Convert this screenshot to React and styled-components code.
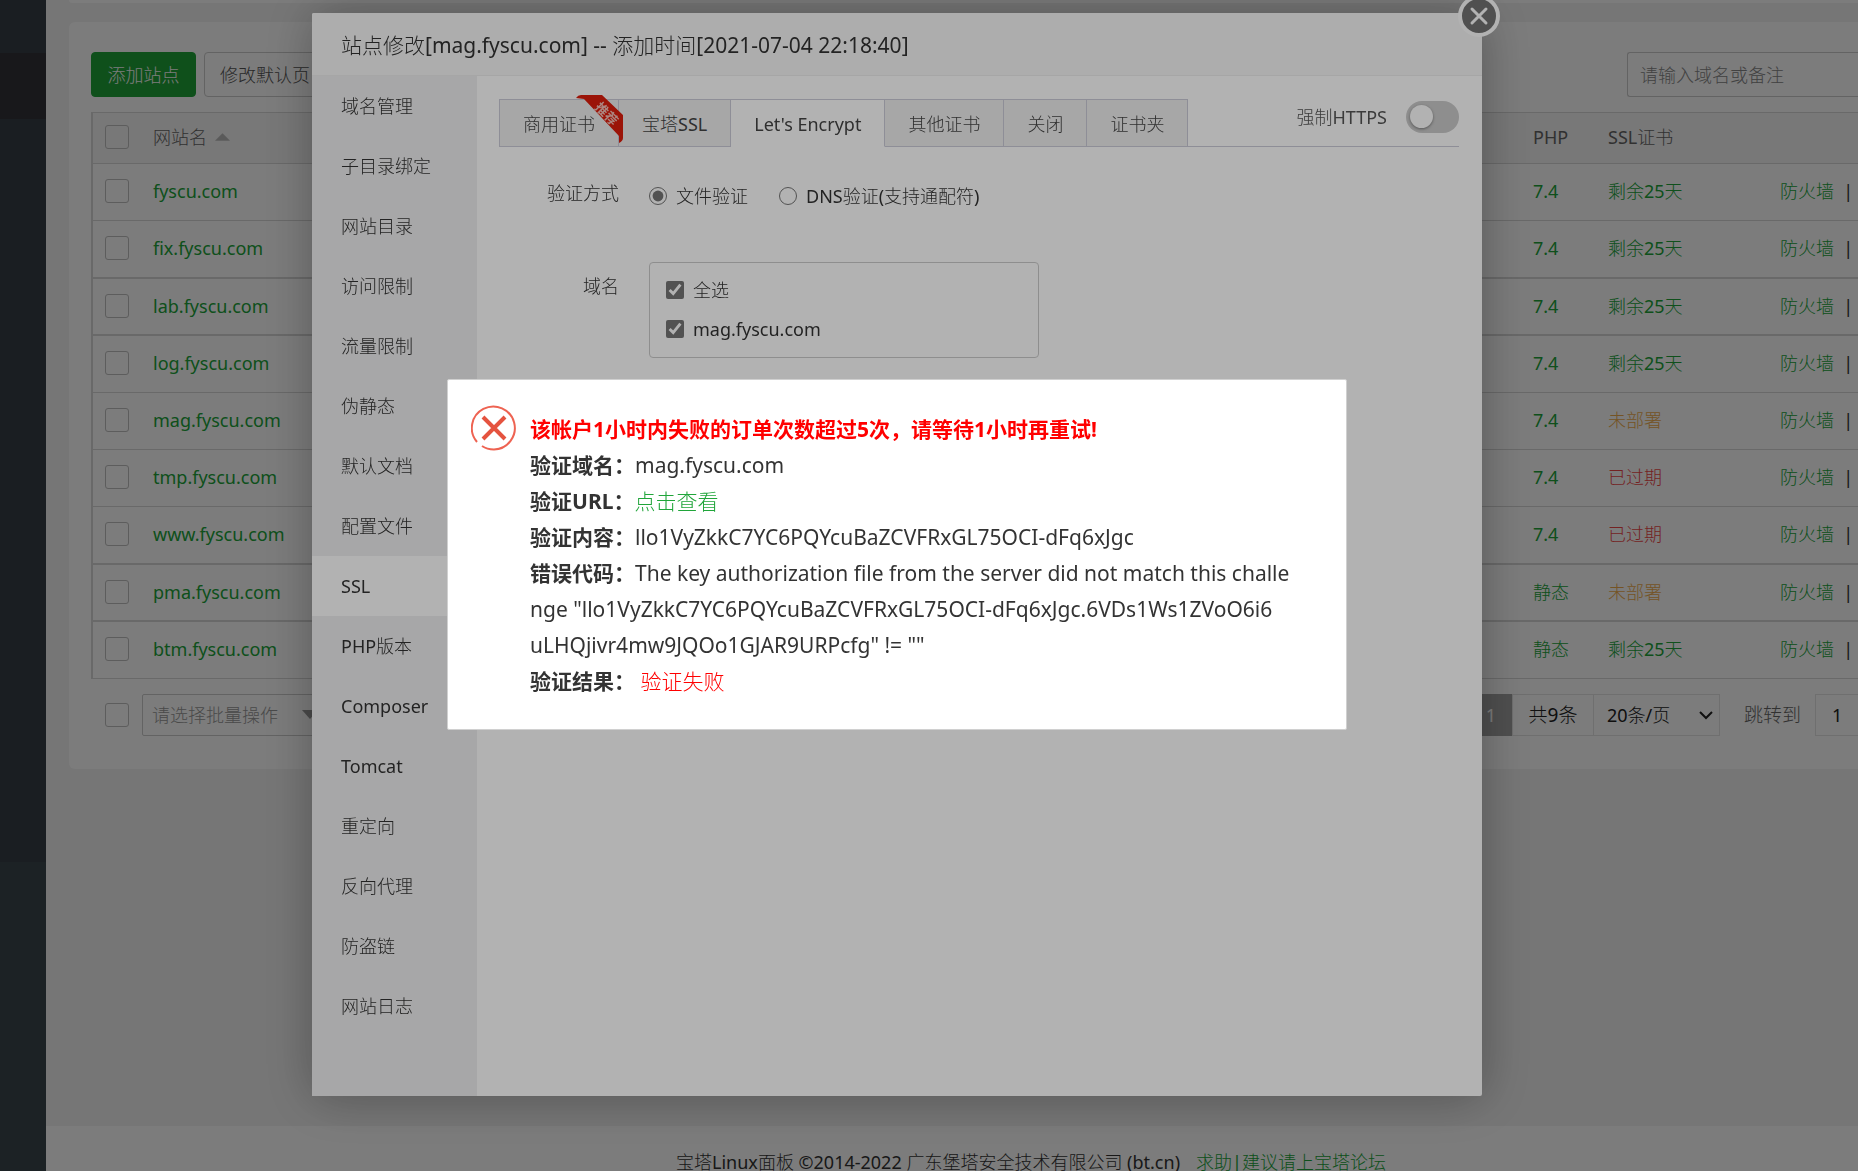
import React, { useState } from 'react'
import styled, { createGlobalStyle } from 'styled-components'

const SITES = [
  { name: 'fyscu.com', php: '7.4', ssl: '剩余25天', state: 'ok' },
  { name: 'fix.fyscu.com', php: '7.4', ssl: '剩余25天', state: 'ok' },
  { name: 'lab.fyscu.com', php: '7.4', ssl: '剩余25天', state: 'ok' },
  { name: 'log.fyscu.com', php: '7.4', ssl: '剩余25天', state: 'ok' },
  { name: 'mag.fyscu.com', php: '7.4', ssl: '未部署', state: 'none' },
  { name: 'tmp.fyscu.com', php: '7.4', ssl: '已过期', state: 'expired' },
  { name: 'www.fyscu.com', php: '7.4', ssl: '已过期', state: 'expired' },
  { name: 'pma.fyscu.com', php: '静态', ssl: '未部署', state: 'none' },
  { name: 'btm.fyscu.com', php: '静态', ssl: '剩余25天', state: 'ok' },
]

const MENU = [
  '域名管理', '子目录绑定', '网站目录', '访问限制', '流量限制', '伪静态', '默认文档', '配置文件',
  'SSL', 'PHP版本', 'Composer', 'Tomcat', '重定向', '反向代理', '防盗链', '网站日志',
]

const TABS = ['商用证书', '宝塔SSL', "Let's Encrypt", '其他证书', '关闭', '证书夹']

const COLORS = { ok: '#20a53a', none: '#f0ad4e', expired: '#ef4848' }

const SiteTable = () => (
  <Table>
    <colgroup>
      <col width="60" />
      <col />
      <col width="75" />
      <col width="172" />
      <col width="78" />
    </colgroup>
    <thead>
      <tr>
        <th><Check type="checkbox" aria-label="全选网站" /></th>
        <th>
          网站名
          <SortArrow viewBox="0 0 16 8"><path d="M8 0l8 8H0z" /></SortArrow>
        </th>
        <th>PHP</th>
        <th>SSL证书</th>
        <th aria-label="操作" />
      </tr>
    </thead>
    <tbody>
      {SITES.map((site) => (
        <tr key={site.name}>
          <td><Check type="checkbox" aria-label={site.name} /></td>
          <td><Link href="#site">{site.name}</Link></td>
          <td><Link href="#php">{site.php}</Link></td>
          <td><Link href="#ssl" $color={COLORS[site.state]}>{site.ssl}</Link></td>
          <td><Link href="#waf">防火墙</Link>&nbsp; |</td>
        </tr>
      ))}
    </tbody>
  </Table>
)

const SitePage = () => (
  <Page>
    <Sidebar>
      <SideBlock $h={53} />
      <SideBlock $h={66} $bg="#333338" />
      <SideBlock $h={743} />
    </Sidebar>
    <Main>
      <TopStrip />
      <Card>
        <Toolbar>
          <AddButton>添加站点</AddButton>
          <PlainButton>修改默认页</PlainButton>
          <Search type="text" placeholder="请输入域名或备注" aria-label="搜索" />
        </Toolbar>
        <SiteTable />
        <TableFoot>
          <Check type="checkbox" aria-label="批量选择" />
          <BatchWrap>
            <BatchSelect aria-label="批量操作">
              <option>请选择批量操作</option>
            </BatchSelect>
            <BatchArrow viewBox="0 0 16 9"><path d="M0 0h16L8 9z" /></BatchArrow>
          </BatchWrap>
          <Pager>
            <PageNow>1</PageNow>
            <PageTotal>共9条</PageTotal>
            <PageSizeWrap>
              <PageSize aria-label="每页条数">
                <option>20条/页</option>
              </PageSize>
              <Chevron viewBox="0 0 14 9"><path d="M1 1l6 6 6-6" /></Chevron>
            </PageSizeWrap>
            <JumpLabel htmlFor="jump">跳转到</JumpLabel>
            <JumpInput id="jump" type="text" defaultValue="1" />
          </Pager>
        </TableFoot>
      </Card>
      <Footer>
        宝塔Linux面板 ©2014-2022 广东堡塔安全技术有限公司 (bt.cn)
        <Link href="#bbs">求助|建议请上宝塔论坛</Link>
      </Footer>
    </Main>
  </Page>
)

const SslPanel = () => {
  const [mode, setMode] = useState('file')
  const [force, setForce] = useState(false)

  return (
    <Panel>
      <TabBar>
        {TABS.map((tab, i) => (
          <Tab key={tab} $on={i === 2}>
            {tab}
            {i === 0 && (
              <Ribbon viewBox="0 0 48 48">
                <path d="M0 3Q2 0 5 0H26L47 20V43Q47 46 43 48V41L8 4z" fill="#de1e0c" />
                <text x="0" y="0" transform="translate(18 13) rotate(45)">推荐</text>
              </Ribbon>
            )}
          </Tab>
        ))}
        <ForceLabel>
          强制HTTPS
          <Switch type="checkbox" checked={force} onChange={() => setForce(!force)} />
        </ForceLabel>
      </TabBar>
      <FormRow>
        <FormName>验证方式</FormName>
        <Options>
          <Option>
            <Tick type="radio" name="mode" checked={mode === 'file'} onChange={() => setMode('file')} />
            文件验证
          </Option>
          <Option>
            <Tick type="radio" name="mode" checked={mode === 'dns'} onChange={() => setMode('dns')} />
            DNS验证(支持通配符)
          </Option>
        </Options>
      </FormRow>
      <FormRow>
        <FormName>域名</FormName>
        <DomainBox>
          <Option><Tick type="checkbox" defaultChecked />全选</Option>
          <Option><Tick type="checkbox" defaultChecked />mag.fyscu.com</Option>
        </DomainBox>
      </FormRow>
    </Panel>
  )
}

const SiteModal = () => (
  <Modal role="dialog" aria-label="站点修改">
    <ModalTitle>站点修改[mag.fyscu.com] -- 添加时间[2021-07-04 22:18:40]</ModalTitle>
    <Close aria-label="关闭">
      <svg viewBox="0 0 42 42" width="42" height="42">
        <circle cx="21" cy="21" r="19" fill="#737373" stroke="#fff" strokeWidth="4" />
        <path d="M14 14l14 14M28 14L14 28" stroke="#fff" strokeWidth="3" strokeLinecap="round" />
      </svg>
    </Close>
    <ModalBody>
      <Menu>
        {MENU.map((item) => (
          <MenuItem key={item} $on={item === 'SSL'}>{item}</MenuItem>
        ))}
      </Menu>
      <SslPanel />
    </ModalBody>
  </Modal>
)

const ErrorBox = () => (
  <Alert role="alertdialog" aria-label="验证失败">
    <ErrorIcon viewBox="0 0 46 46">
      <path d="M6 37A21.500 21.500 0 1 1 23 44.500Q16 44.500 11 41" />
      <path className="cross" d="M12 12L34 34M34 12L12 34" />
    </ErrorIcon>
    <AlertText>
      <AlertLine $red><b>该帐户1小时内失败的订单次数超过5次，请等待1小时再重试!</b></AlertLine>
      <AlertLine><b>验证域名：</b>mag.fyscu.com</AlertLine>
      <AlertLine><b>验证URL：</b><Link href="#view">点击查看</Link></AlertLine>
      <AlertLine><b>验证内容：</b>llo1VyZkkC7YC6PQYcuBaZCVFRxGL75OCI-dFq6xJgc</AlertLine>
      <AlertLine>
        <b>错误代码：</b>The key authorization file from the server did not match this challe
        <br />
        nge "llo1VyZkkC7YC6PQYcuBaZCVFRxGL75OCI-dFq6xJgc.6VDs1Ws1ZVoO6i6
        <br />
        uLHQjivr4mw9JQOo1GJAR9URPcfg" != ""
      </AlertLine>
      <AlertLine><b>验证结果：</b> <Failed>验证失败</Failed></AlertLine>
    </AlertText>
  </Alert>
)

const App = () => (
  <>
    <GlobalStyle />
    <SitePage />
    <Layer>
      <SiteModal />
    </Layer>
    <Layer>
      <ErrorBox />
    </Layer>
  </>
)

export default App


const GlobalStyle = createGlobalStyle`
  * {
    box-sizing: border-box;
  }
  body {
    margin: 0;
    overflow: hidden;
    color: #333;
    font: 400 18px/26px "Noto Sans", "Noto Sans CJK SC Light", "Noto Sans CJK SC", sans-serif;
  }
  button, input, select {
    margin: 0;
    font: inherit;
    color: inherit;
  }
`;

const Link = styled.a`
  color: ${(props) => props.$color || '#20a53a'};
  text-decoration: none;
`;

const Page = styled.div`
  display: flex;
  height: 100vh;
  overflow: hidden;
  background: #f3f3f3;
`;

const Sidebar = styled.aside`
  flex: none;
  width: 46px;
  background: #3c474d;
`;

const SideBlock = styled.div`
  height: ${(props) => props.$h}px;
  background: ${(props) => props.$bg || '#373e47'};
`;

const Main = styled.main`
  flex: 1;
  min-width: 0;
  display: flex;
  flex-direction: column;
`;

const TopStrip = styled.div`
  height: 3px;
  margin: 0 0 19px 23px;
  background: #fff;
  border-radius: 0 0 0 6px;
`;

const Card = styled.section`
  margin-left: 23px;
  padding: 30px 0 33px 22px;
  background: #fff;
  border-radius: 6px 0 0 6px;
`;

const Toolbar = styled.div`
  display: flex;
  gap: 8px;
  margin-bottom: 15px;
`;

const AddButton = styled.button`
  min-width: 105px;
  height: 45px;
  padding: 0 15px;
  color: #fff;
  background: #20a53a;
  border: 1px solid #20a53a;
  border-radius: 4px;
`;

const PlainButton = styled.button`
  height: 45px;
  padding: 0 15px;
  color: #555;
  background: #fff;
  border: 1px solid #ccc;
  border-radius: 4px;
`;

const Search = styled.input`
  width: 231px;
  height: 45px;
  margin-left: auto;
  padding: 0 12px;
  border: 1px solid #ccc;
  border-right: 0;
  border-radius: 3px 0 0 3px;
  background: #fff;

  &::placeholder {
    color: #888;
    opacity: 1;
  }
`;

const Table = styled.table`
  width: 100%;
  table-layout: fixed;
  border-spacing: 0;
  border-top: 1px solid #d8d8d8;
  border-left: 2px solid #d8d8d8;

  th, td {
    padding: 0 0 2px;
    text-align: left;
    font-weight: inherit;
    white-space: nowrap;
    border-bottom: 1px solid #d8d8d8;
  }
  th {
    height: 51px;
    color: #666;
    background: #f6f6f6;
  }
  td {
    height: 57px;
  }
  th:first-child, td:first-child {
    padding-left: 12px;
  }
  tbody tr:nth-child(5n + 2) td {
    height: 58px;
    border-bottom-width: 2px;
  }
  tbody tr:nth-child(5n + 3) td {
    border-bottom-width: 2px;
  }
`;

const Check = styled.input`
  display: block;
  flex: none;
  appearance: none;
  width: 24px;
  height: 24px;
  border: 1px solid #c0c0c0;
  border-radius: 3px;
  background: #fff;

  th & {
    background: transparent;
  }
`;

const SortArrow = styled.svg`
  width: 15px;
  height: 8px;
  margin-left: 8px;
  vertical-align: 3px;
  fill: #bbb;
`;

const TableFoot = styled.div`
  display: flex;
  align-items: center;
  margin-top: 15px;
  padding-left: 14px;
`;

const BatchWrap = styled.div`
  position: relative;
  margin-left: 13px;
`;

const BatchSelect = styled.select`
  display: block;
  appearance: none;
  width: 185px;
  height: 42px;
  padding: 0 9px;
  color: #999;
  background: #fff;
  border: 1px solid #ccc;
  border-radius: 2px;
`;

const BatchArrow = styled.svg`
  position: absolute;
  right: 9px;
  top: 16px;
  width: 16px;
  height: 9px;
  fill: #999;
`;

const Pager = styled.div`
  display: flex;
  align-items: center;
  margin-left: auto;
`;

const PageNow = styled.span`
  width: 42px;
  height: 42px;
  line-height: 42px;
  text-align: center;
  color: #fff;
  background: #a4a4a4;
`;

const PageTotal = styled.span`
  width: 82px;
  height: 42px;
  line-height: 40px;
  text-align: center;
  font-size: 19px;
  color: #222;
  border: 1px solid #e4e4e4;
`;

const PageSizeWrap = styled.div`
  position: relative;
`;

const PageSize = styled.select`
  display: block;
  appearance: none;
  width: 126px;
  height: 42px;
  padding: 0 13px;
  color: #222;
  background: #fff;
  border: 1px solid #e4e4e4;
  border-left: 0;
`;

const Chevron = styled.svg`
  position: absolute;
  right: 7px;
  top: 17px;
  width: 14px;
  height: 9px;
  fill: none;
  stroke: #222;
  stroke-width: 2;
`;

const JumpLabel = styled.label`
  margin: 0 14px 0 24px;
  font-size: 19px;
  color: #666;
`;

const JumpInput = styled.input`
  width: 43px;
  height: 42px;
  padding: 0 16px;
  color: #222;
  border: 1px solid #e4e4e4;
  border-right: 0;
  background: #fff;
`;

const Footer = styled.footer`
  flex: none;
  display: flex;
  justify-content: center;
  gap: 16px;
  height: 45px;
  margin-top: auto;
  padding: 26px 0 0 158px;
  line-height: 20px;
  background: #fff;
  white-space: nowrap;
`;

/* dimmed backdrop, one for each open dialog */
const Layer = styled.div`
  position: fixed;
  inset: 0;
  display: flex;
  align-items: center;
  justify-content: center;
  padding: 0 64px 62px 0;
  background: rgba(0, 0, 0, 0.3);
`;

const Modal = styled.div`
  position: relative;
  display: flex;
  flex-direction: column;
  width: 1170px;
  max-width: 90vw;
  background: #fff;
  border-radius: 2px;
  box-shadow: 1px 1px 50px rgba(0, 0, 0, 0.3);
`;

const ModalTitle = styled.h1`
  height: 63px;
  margin: 0;
  padding: 0 29px;
  font-size: 21px;
  font-weight: inherit;
  line-height: 64px;
  background: #f8f8f8;
  border-bottom: 1px solid #eee;
  border-radius: 2px 2px 0 0;
`;

const Close = styled.button`
  position: absolute;
  right: -18px;
  top: -18px;
  width: 42px;
  height: 42px;
  padding: 0;
  border: 0;
  background: none;

  svg {
    display: block;
  }
`;

const ModalBody = styled.div`
  display: flex;
`;

const Menu = styled.nav`
  flex: none;
  display: flex;
  flex-direction: column;
  width: 165px;
  padding-bottom: 60px;
  background: #f0f0f1;
`;

const MenuItem = styled.button`
  height: 60px;
  padding: 0 0 0 29px;
  text-align: left;
  border: 0;
  background: ${(props) => props.$on ? '#fff' : 'transparent'};
`;

const Panel = styled.div`
  flex: 1;
  padding: 23px 23px 0 22px;
`;

const TabBar = styled.div`
  display: flex;
  height: 48px;
  border-bottom: 1px solid #ccccd8;
`;

const Tab = styled.button`
  position: relative;
  height: 48px;
  padding: 1px 23px 0;
  color: #444;
  white-space: nowrap;
  background: ${(props) => props.$on ? '#fff' : '#f0f0f0'};
  border: 1px solid #ccccd8;
  border-left-width: 0;
  border-bottom-color: ${(props) => props.$on ? '#fff' : '#ccccd8'};

  &:first-child {
    border-left-width: 1px;
    z-index: 1;
  }
`;

const Ribbon = styled.svg`
  position: absolute;
  right: -6px;
  top: -5px;
  width: 48px;
  height: 48px;

  text {
    font-family: "Noto Sans CJK SC", sans-serif;
    font-size: 13px;
    font-weight: 700;
    fill: #f6c0b8;
  }
`;

const ForceLabel = styled.label`
  display: flex;
  align-items: center;
  gap: 19px;
  height: 36px;
  margin-left: auto;
  color: #555;
`;

const Switch = styled.input`
  appearance: none;
  width: 53px;
  height: 32px;
  padding: 4px;
  border-radius: 16px;
  background: ${(props) => props.checked ? '#20a53a' : '#ccc'};

  &::before {
    content: '';
    display: block;
    width: 23px;
    height: 23px;
    margin-left: ${(props) => props.checked ? '22px' : '0'};
    border-radius: 50%;
    background: #fff;
    box-shadow: 0 1px 3px rgba(0, 0, 0, 0.4);
  }
`;

const FormRow = styled.div`
  display: flex;
  gap: 30px;
  margin-top: 33px;

  & + & {
    margin-top: 53px;
  }
`;

const FormName = styled.span`
  width: 120px;
  text-align: right;

  ${FormRow} + ${FormRow} & {
    padding-top: 11px;
  }
`;

const Options = styled.div`
  display: flex;
  gap: 31px;
  padding-top: 3px;
`;

const Option = styled.label`
  display: flex;
  align-items: center;
  gap: 9px;
`;

const Tick = styled.input`
  width: 18px;
  height: 18px;
  accent-color: #767676;
`;

const DomainBox = styled.div`
  display: flex;
  flex-direction: column;
  gap: 13px;
  width: 390px;
  height: 96px;
  padding: 14px 16px;
  border: 1px solid #ccc;
  border-radius: 4px;
`;

const Alert = styled.div`
  display: flex;
  align-items: flex-start;
  gap: 13px;
  width: 900px;
  max-width: 90vw;
  padding: 25px 28px 30px 23px;
  background: #fff;
  border: 1px solid #d0d0d0;
  border-radius: 2px;
`;

const ErrorIcon = styled.svg`
  flex: none;
  width: 46px;
  height: 46px;
  fill: none;
  stroke: #ee6352;
  stroke-width: 2;

  .cross {
    stroke: #e5533f;
    stroke-width: 4;
  }
`;

const AlertText = styled.div`
  flex: 1;
  padding-top: 6px;
  font-size: 21px;
  line-height: 36px;
  word-break: break-all;
`;

const AlertLine = styled.p`
  margin: 0;
  color: ${(props) => props.$red ? 'red' : 'inherit'};

  b {
    font-family: "Noto Sans", "Noto Sans CJK SC", sans-serif;
    font-weight: 700;
  }
`;

const Failed = styled.span`
  color: red;
`;
